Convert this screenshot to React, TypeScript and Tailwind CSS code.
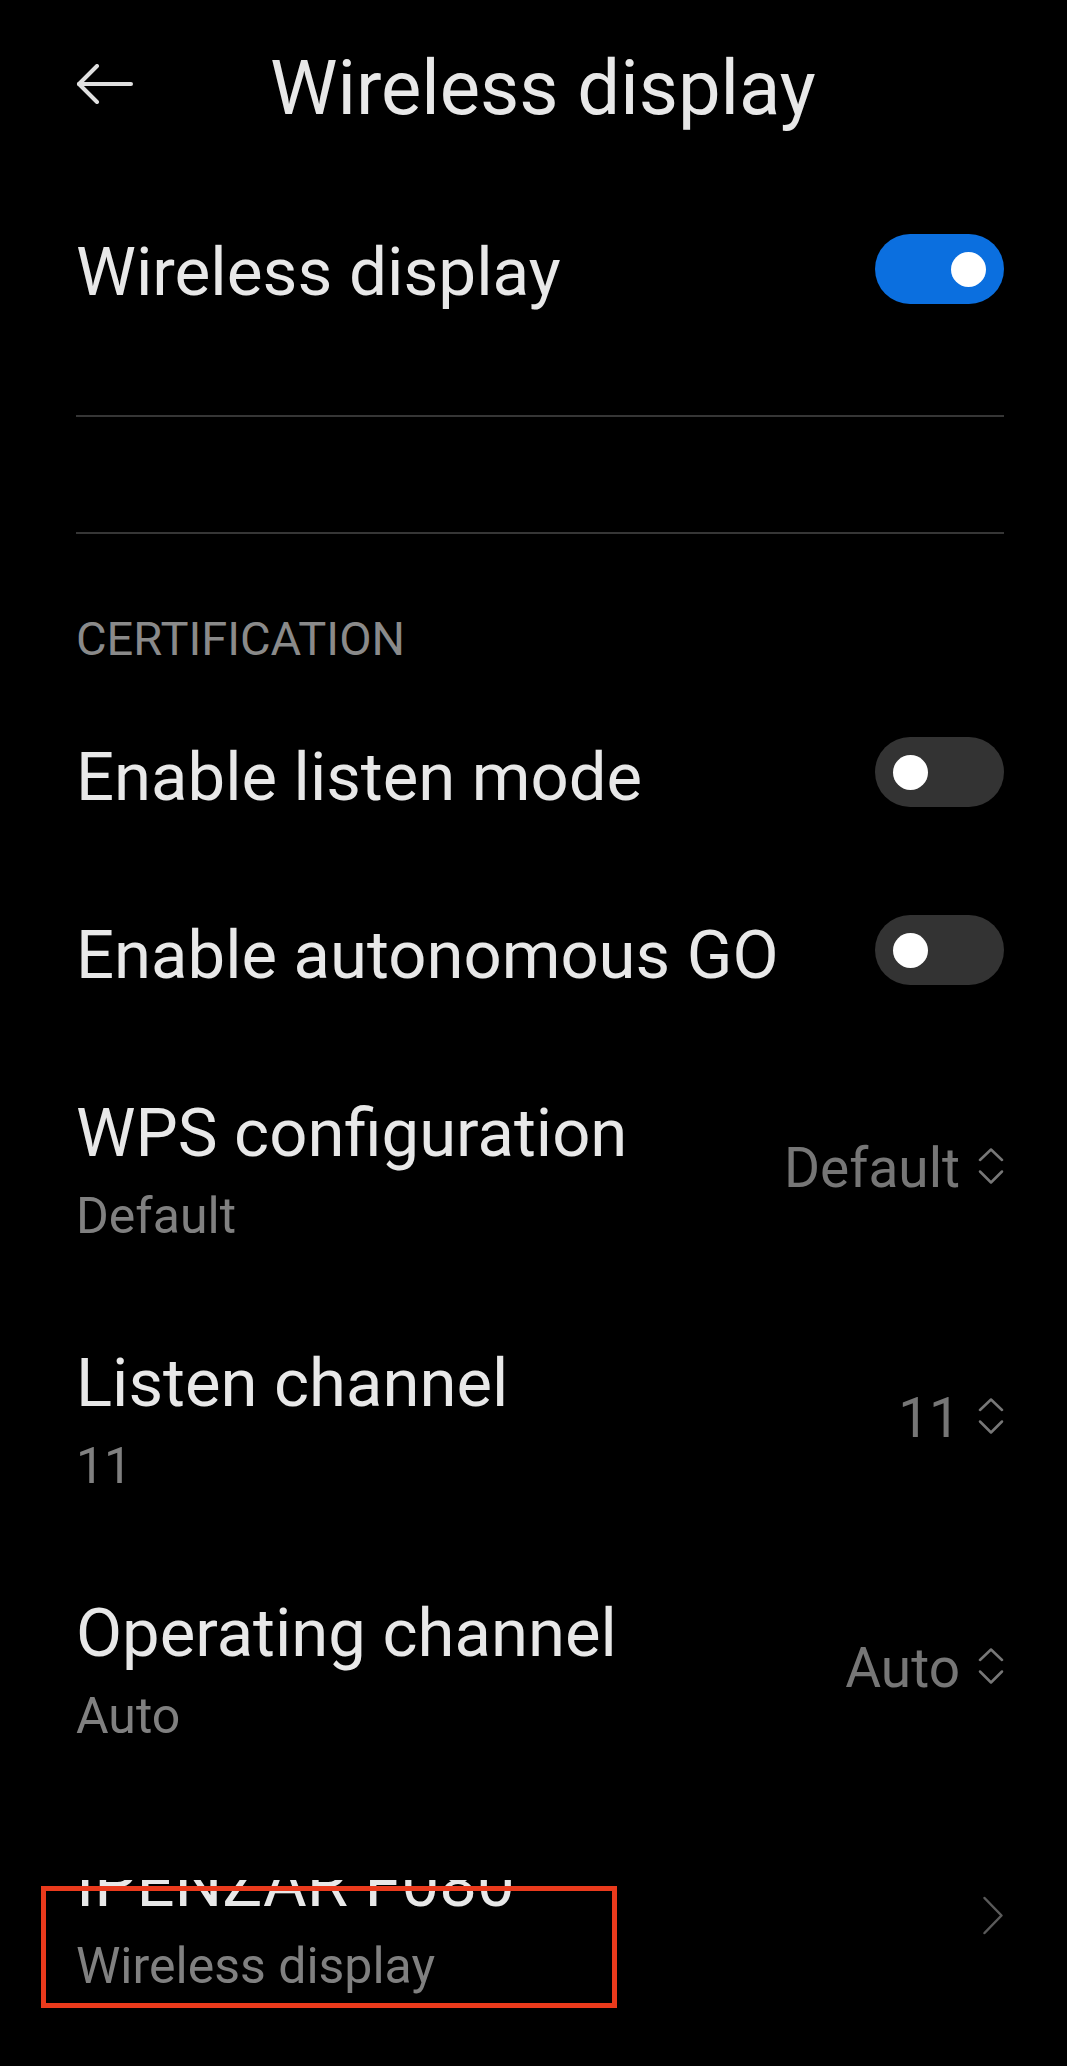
import React from "react";

function Toggle({ on }: { on: boolean }) {
  return (
    <div
      className={
        on
          ? "flex h-[70px] w-[129px] shrink-0 items-center justify-end rounded-full bg-[#0b6fdf] px-[18px]"
          : "flex h-[70px] w-[129px] shrink-0 items-center justify-start rounded-full bg-[#333333] px-[18px]"
      }
    >
      <div className="h-[35px] w-[35px] rounded-full bg-white" />
    </div>
  );
}

function UpDown() {
  return (
    <svg width="26" height="40" viewBox="0 0 26 40" fill="none" stroke="#777777" strokeWidth="2.5" strokeLinecap="round" strokeLinejoin="round">
      <path d="M2 12 L13 1.5 L24 12" />
      <path d="M2 23.5 L13 34.5 L24 23.5" />
    </svg>
  );
}

function ToggleRow({ label, on }: { label: string; on: boolean }) {
  return (
    <div className="flex h-[178px] items-start justify-between">
      <div className="mt-[45px] text-[67px] leading-[80px] text-[#e8e8e8]">{label}</div>
      <div className="mt-[45px]">
        <Toggle on={on} />
      </div>
    </div>
  );
}

function SelectRow({ title, value }: { title: string; value: string }) {
  return (
    <div className="flex h-[250px] items-start justify-between">
      <div className="flex flex-col">
        <div className="mt-[45px] text-[67px] leading-[80px] text-[#e8e8e8]">{title}</div>
        <div className="mt-[13px] text-[50px] leading-[60px] text-[#808080]">{value}</div>
      </div>
      <div className="mt-[85px] flex items-center gap-[18px]">
        <span className="text-[55px] leading-[70px] text-[#767676]">{value}</span>
        <UpDown />
      </div>
    </div>
  );
}

export default function App() {
  return (
    <div className="min-h-[2066px] w-[1067px] overflow-hidden bg-black font-[Roboto,'Noto_Sans',sans-serif]">
      {/* Header */}
      <div className="flex h-[168px] items-start pl-[76px] pt-[43px]">
        <svg className="mt-[21px]" width="58" height="40" viewBox="0 0 58 40" fill="none" stroke="#e0e0e0" strokeWidth="4" strokeLinecap="round" strokeLinejoin="round">
          <path d="M3 20 H55" />
          <path d="M21 2 L3 20 L21 38" />
        </svg>
        <div className="ml-[136px] text-[76px] leading-[90px] text-[#e8e8e8]">Wireless display</div>
      </div>

      <div className="pl-[76px] pr-[63px]">
        {/* Main toggle */}
        <div className="flex h-[247px] items-start justify-between">
          <div className="mt-[64px] text-[67.5px] leading-[80px] text-[#e8e8e8]">Wireless display</div>
          <div className="mt-[66px]">
            <Toggle on={true} />
          </div>
        </div>
        <div className="h-[2px] bg-[#363636]" />
        <div className="h-[115px]" />
        <div className="h-[2px] bg-[#363636]" />

        {/* Section header */}
        <div className="h-[158px] pt-[75px]">
          <div className="text-[47px] leading-[60px] text-[#8a8a8a]">CERTIFICATION</div>
        </div>

        <ToggleRow label="Enable listen mode" on={false} />
        <ToggleRow label="Enable autonomous GO" on={false} />
        <SelectRow title="WPS configuration" value="Default" />
        <SelectRow title="Listen channel" value="11" />
        <SelectRow title="Operating channel" value="Auto" />

        {/* Bottom device row */}
        <div className="relative flex h-[250px] items-start justify-between">
          <div className="flex flex-col">
            <div className="mt-[82px] h-[43px] overflow-hidden">
              <div className="-mt-[37px] whitespace-nowrap text-[67px] leading-[80px] text-[#e8e8e8]">IPENZAR F080</div>
            </div>
            <div className="mt-[13px] text-[50px] leading-[60px] text-[#808080]">Wireless display</div>
          </div>
          <svg className="mt-[97px]" width="22" height="41" viewBox="0 0 22 41" fill="none" stroke="#5a5a5a" strokeWidth="2.5" strokeLinecap="round" strokeLinejoin="round">
            <path d="M2.5 3 L19.5 20.5 L2.5 38" />
          </svg>
          <div className="pointer-events-none absolute left-[-35px] top-[88px] h-[122px] w-[576px] border-[5px] border-[#ea3a1c]" />
        </div>
      </div>
    </div>
  );
}
